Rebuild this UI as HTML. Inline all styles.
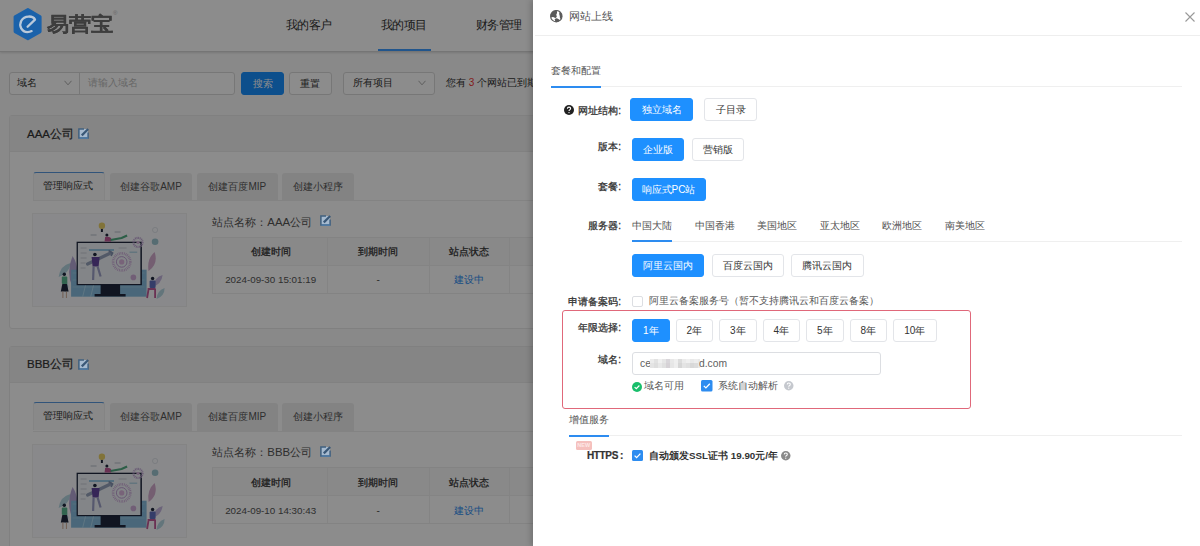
<!DOCTYPE html>
<html><head><meta charset="utf-8">
<style>
*{box-sizing:border-box;margin:0;padding:0}
html,body{width:1200px;height:546px;overflow:hidden}
body{position:relative;background:#f9f9f9;font-family:"Liberation Sans",sans-serif;color:#333;font-size:10px}
.a{position:absolute;white-space:nowrap}
.hdr{left:0;top:0;width:1200px;height:51.8px;background:#fff;border-bottom:1px solid #d6d6d6;box-shadow:0 1px 2px rgba(0,0,0,.12)}
.nav{font-size:11.5px;color:#333;top:16.6px;line-height:16px;letter-spacing:-.6px}
.ibox{border:1px solid #d9d9d9;border-radius:3px;background:#fff}
.btn{border:1px solid #d9d9d9;border-radius:3px;background:#fff;text-align:center;color:#333}
.bp{background:#1890ff;border-color:#1890ff;color:#fff}
.card{left:8.5px;width:1183px;border:1px solid #eaeaea;border-radius:3px;background:#fff}
.chd{left:0;top:0;width:100%;height:36px;border-bottom:1px solid #ebebeb;background:#f2f2f2}
.tab{top:0;height:28px;border:none;background:#efefef;color:#555;font-size:10px;text-align:center;line-height:27px;border-radius:3px 3px 0 0}
.tab.on{background:#fafafa;border:1px solid #f0f0f0;border-bottom:none;border-top:1.5px solid #5a9ade;color:#333;line-height:25px}
.tbl{border:1px solid #efefef}
.th{font-weight:400;-webkit-text-stroke:.25px #333;color:#333;font-size:10px;text-align:center}
.td{color:#555;font-size:10px;text-align:center}
.mask{left:0;top:0;width:1200px;height:546px;background:rgba(0,0,0,.45)}
.drw{left:533px;top:0;width:667px;height:546px;background:#fff;box-shadow:-2px 0 6px rgba(0,0,0,.2)}
.lbl{font-weight:400;-webkit-text-stroke:.28px #333;color:#333;font-size:10px;text-align:right;right:0;line-height:12px}
.dbtn{border:1px solid #e3e5e9;border-radius:3px;background:#fff;text-align:center;color:#333;font-size:10px;height:23px;line-height:21px}
.dbtn.on{background:#1e90ff;border-color:#1e90ff;color:#fff}
.stab{font-size:10px;color:#515151;line-height:12px}
</style></head>
<body>
<!-- ===== background page ===== -->
<div class="a hdr"></div>

<div class="a" style="left:46.5px;top:10px;font-size:22px;font-weight:bold;color:#707070;-webkit-text-stroke:.15px #707070;letter-spacing:0px;line-height:28px;transform:scaleY(.9);transform-origin:0 22px">易营宝</div>
<div class="a" style="left:113px;top:10px;font-size:6px;color:#bbb">®</div>
<div class="a nav" style="left:285.8px">我的客户</div>
<div class="a nav" style="left:381px">我的项目</div>
<div class="a nav" style="left:476px">财务管理</div>
<div class="a" style="left:377.5px;top:49px;width:53px;height:2px;background:#3c9cff"></div>

<!-- search row -->
<div class="a ibox" style="left:9px;top:72px;width:226px;height:23px"></div>
<div class="a" style="left:79px;top:72px;width:1px;height:23px;background:#d9d9d9"></div>
<div class="a" style="left:17px;top:77px;font-size:10px;line-height:12px;color:#333">域名</div>
<svg class="a" style="left:64px;top:80px" width="8" height="6" viewBox="0 0 8 6"><path d="M.5 .8 L4 4.8 L7.5 .8" fill="none" stroke="#aaa" stroke-width="1"/></svg>
<div class="a" style="left:88px;top:77px;font-size:10px;line-height:12px;color:#bbb">请输入域名</div>
<div class="a btn bp" style="left:241px;top:72px;width:43px;height:23px;line-height:21px;font-size:10px">搜索</div>
<div class="a btn" style="left:288.5px;top:72px;width:43px;height:23px;line-height:21px;font-size:10px">重置</div>
<div class="a ibox" style="left:343px;top:72px;width:92px;height:23px"></div>
<div class="a" style="left:353px;top:77px;font-size:10px;line-height:12px;color:#333">所有项目</div>
<svg class="a" style="left:418px;top:80px" width="8" height="6" viewBox="0 0 8 6"><path d="M.5 .8 L4 4.8 L7.5 .8" fill="none" stroke="#aaa" stroke-width="1"/></svg>
<div class="a" style="left:446px;top:77px;font-size:10px;line-height:12px;color:#333">您有 <span style="color:#e33">3</span> 个网站已到期</div>

<!-- card template placeholder -->
<div class="a card" style="top:115px;height:214px">
 <div class="a chd"></div>
 <div class="a" style="left:17.5px;top:10.5px;font-size:11.5px;line-height:14px;color:#333;-webkit-text-stroke:.2px #333">AAA公司</div>
 <svg class="a" style="left:68.6px;top:12.2px;z-index:5" width="11" height="11" viewBox="0 0 11 11"><rect x="1" y="1" width="9" height="9" fill="#a6bacf"/><path d="M6 .9 H.9 V10.1 H10.1 V4.6" fill="none" stroke="#40607f" stroke-width="1.5"/><path d="M1.5 10.1 H10.1" stroke="#4f7eab" stroke-width="1.3"/><path d="M3.8 7.4 L10.2 1" stroke="#3a5877" stroke-width="2.2"/></svg>
 <div class="a" style="left:23.4px;top:84px;width:1150px;height:1px;background:#efefef"></div>
 <div class="a tab on" style="left:23.4px;top:55.5px;width:72px;text-indent:-2px">管理响应式</div>
 <div class="a tab" style="left:100.3px;top:56.5px;width:82.4px;height:27.5px">创建谷歌AMP</div>
 <div class="a tab" style="left:187.3px;top:56.5px;width:81px;height:27.5px">创建百度MIP</div>
 <div class="a tab" style="left:272.8px;top:56.5px;width:72px;height:27.5px">创建小程序</div>
 <div class="a" style="left:22.9px;top:97px;width:155px;height:94px;border:1px solid #f0f0f0;background:#f9fafd;overflow:hidden"><svg width="153" height="92" viewBox="0 0 153 92" style="filter:saturate(.7)">
<g transform="translate(-32.4,-213)">
 <path d="M58 276 q2 -12 12 -14 q-1 10 -12 14z" fill="#a8d8e8"/>
 <path d="M72 286 q-7 -14 0 -31 q9 14 0 31z" fill="#b9a3e6"/>
 <path d="M66 292 q-6 -6 -2 -14 q6 6 2 14z" fill="#9fd0e0"/>
 <path d="M148 270 q-2 -12 6 -19 q4 12 -6 19z" fill="#e0a6d8"/>
 <path d="M152 286 q2 -10 10 -12 q-1 9 -10 12z" fill="#c9b3ee"/>
 <path d="M156 298 q0 -8 8 -11 q0 8 -8 11z" fill="#a8d8e8"/>
 <rect x="70.5" y="268.7" width="75.5" height="27" fill="#74c0f0"/>
 <path d="M72 272 h72 M72 279 h72 M72 286 h72" stroke="#8fd0f5" stroke-width=".8"/>
 <path d="M82 296 l6 -24 M90 296 l6 -24" stroke="#a8e0ff" stroke-width=".8"/>
 <rect x="100" y="284" width="19.5" height="10.5" fill="#1b2746"/>
 <rect x="94" y="293" width="31" height="2.5" fill="#1b2746"/>
 <rect x="76" y="240.7" width="65.3" height="43.5" fill="#1b2746"/>
 <rect x="77.3" y="242" width="62.5" height="41" fill="#eef2f9"/>
 <rect x="88.4" y="248.2" width="25" height="1.6" fill="#6fc0f0"/>
 <rect x="128.9" y="250.5" width="7.7" height="1.5" fill="#a8d8f0"/>
 <path d="M80 247 h6 M80 252 h6 M80 257 h6 M80 262 h5 M80 267 h5" stroke="#c9d0dc" stroke-width="1"/>
 <path d="M118 247 h8" stroke="#c9d0dc" stroke-width="1"/>
 <circle cx="121.1" cy="260.9" r="8.6" fill="none" stroke="#d6a6ea" stroke-width="2.6" stroke-dasharray=".8 .9"/>
 <circle cx="121.1" cy="260.9" r="5.3" fill="none" stroke="#c99ae6" stroke-width="1"/>
 <circle cx="121.1" cy="260.9" r="2.6" fill="#e6b0e8"/>
 <circle cx="137.4" cy="241.4" r="4.5" fill="none" stroke="#c9a3e6" stroke-width="2.2" stroke-dasharray="1 .6"/>
 <circle cx="137.4" cy="241.4" r="1.6" fill="#e0b0e8"/>
 <circle cx="154.5" cy="240.7" r="3.3" fill="#8fc8d8"/>
 <circle cx="154.5" cy="229" r="2.6" fill="none" stroke="#d8dde8" stroke-width=".8"/>
 <circle cx="132.8" cy="276.4" r="2.8" fill="#d9a6e6"/>
 <path d="M87 263 L110 252" stroke="#8fa3c8" stroke-width="3.2" stroke-linecap="round"/>
 <path d="M108 249.5 l4 2.5 l-1.5 3" fill="none" stroke="#7d93bf" stroke-width="1.6"/>
 <circle cx="94.3" cy="253.5" r="1.8" fill="#1b2746"/>
 <path d="M91 256 h8 l-1 9.5 h-6z" fill="#6a3fc0"/>
 <path d="M93 265.5 l-.5 13.5 M97 265.5 l3 10" stroke="#9aa0d8" stroke-width="2.2"/>
 <path d="M101.3 227.5 v3.5" stroke="#1b2746" stroke-width="2"/>
 <circle cx="101.3" cy="224.8" r="3.2" fill="#f7d23c"/>
 <path d="M90 234 h6 M114 231 h6" stroke="#b8c2d0" stroke-width="1.2"/>
 <circle cx="106.3" cy="234" r="1.5" fill="#1b2746"/>
 <path d="M104.5 236 q3 -1 6 1 v3.5 h-6.5z" fill="#e34da6"/>
 <path d="M110 239 L121 237 L126.5 234.5" fill="none" stroke="#35b57a" stroke-width="2.2"/>
 <circle cx="63.7" cy="273.3" r="1.7" fill="#1b2746"/>
 <rect x="61.2" y="275.5" width="5.5" height="7.5" rx="1" fill="#3fbf8a"/>
 <path d="M60.2 290.5 l1.5 -7.5 h4.6 l1.7 7.5z" fill="#1b2746"/>
 <path d="M62.3 290.5 v6.5 M65.8 290.5 v6.5" stroke="#d9a78a" stroke-width="1"/>
 <circle cx="152" cy="277.5" r="1.7" fill="#1b2746"/>
 <rect x="149" y="279.5" width="6" height="7.5" rx="1" fill="#5a6fe0"/>
 <path d="M147 288 h8 M148 288 l-1.5 9 M154.5 288 v9" stroke="#e34da6" stroke-width="1.8" fill="none"/>
</g></svg></div>
 <div class="a" style="left:202.8px;top:98.6px;font-size:11.4px;line-height:14px;color:#555">站点名称：AAA公司</div>
 <svg class="a" style="left:310.3px;top:99.2px;z-index:5" width="11" height="11" viewBox="0 0 11 11"><rect x="1" y="1" width="9" height="9" fill="#a6bacf"/><path d="M6 .9 H.9 V10.1 H10.1 V4.6" fill="none" stroke="#40607f" stroke-width="1.5"/><path d="M1.5 10.1 H10.1" stroke="#4f7eab" stroke-width="1.3"/><path d="M3.8 7.4 L10.2 1" stroke="#3a5877" stroke-width="2.2"/></svg>
 <div class="a tbl" style="left:202.8px;top:120.8px;width:980px;height:57px">
  <div class="a" style="left:0;top:0;width:100%;height:27.8px;background:#fafafa;border-bottom:1px solid #f0f0f0"></div>
  <div class="a" style="left:114.2px;top:0;width:1px;height:100%;background:#f0f0f0"></div>
  <div class="a" style="left:216.2px;top:0;width:1px;height:100%;background:#f0f0f0"></div>
  <div class="a" style="left:296.1px;top:0;width:1px;height:100%;background:#f0f0f0"></div>
  <div class="a th" style="left:0;top:8.2px;width:114.7px;line-height:12px">创建时间</div>
  <div class="a th" style="left:114.2px;top:8.2px;width:101.5px;line-height:12px">到期时间</div>
  <div class="a th" style="left:216.2px;top:8.2px;width:79px;line-height:12px">站点状态</div>
  <div class="a td" style="left:0;top:36.5px;width:114.7px;line-height:12px;font-size:9.8px">2024-09-30 15:01:19</div>
  <div class="a td" style="left:114.2px;top:36.5px;width:101.5px;line-height:12px">-</div>
  <div class="a td" style="left:216.2px;top:36.5px;width:79px;line-height:12px;color:#2d8cf0">建设中</div>
 </div>
</div>
<div class="a card" style="top:345.7px;height:214px">
 <div class="a chd"></div>
 <div class="a" style="left:17.5px;top:10.5px;font-size:11.5px;line-height:14px;color:#333;-webkit-text-stroke:.2px #333">BBB公司</div>
 <svg class="a" style="left:68.6px;top:12.2px;z-index:5" width="11" height="11" viewBox="0 0 11 11"><rect x="1" y="1" width="9" height="9" fill="#a6bacf"/><path d="M6 .9 H.9 V10.1 H10.1 V4.6" fill="none" stroke="#40607f" stroke-width="1.5"/><path d="M1.5 10.1 H10.1" stroke="#4f7eab" stroke-width="1.3"/><path d="M3.8 7.4 L10.2 1" stroke="#3a5877" stroke-width="2.2"/></svg>
 <div class="a" style="left:23.4px;top:84px;width:1150px;height:1px;background:#efefef"></div>
 <div class="a tab on" style="left:23.4px;top:55.5px;width:72px;text-indent:-2px">管理响应式</div>
 <div class="a tab" style="left:100.3px;top:56.5px;width:82.4px;height:27.5px">创建谷歌AMP</div>
 <div class="a tab" style="left:187.3px;top:56.5px;width:81px;height:27.5px">创建百度MIP</div>
 <div class="a tab" style="left:272.8px;top:56.5px;width:72px;height:27.5px">创建小程序</div>
 <div class="a" style="left:22.9px;top:97px;width:155px;height:94px;border:1px solid #f0f0f0;background:#f9fafd;overflow:hidden"><svg width="153" height="92" viewBox="0 0 153 92" style="filter:saturate(.7)">
<g transform="translate(-32.4,-213)">
 <path d="M58 276 q2 -12 12 -14 q-1 10 -12 14z" fill="#a8d8e8"/>
 <path d="M72 286 q-7 -14 0 -31 q9 14 0 31z" fill="#b9a3e6"/>
 <path d="M66 292 q-6 -6 -2 -14 q6 6 2 14z" fill="#9fd0e0"/>
 <path d="M148 270 q-2 -12 6 -19 q4 12 -6 19z" fill="#e0a6d8"/>
 <path d="M152 286 q2 -10 10 -12 q-1 9 -10 12z" fill="#c9b3ee"/>
 <path d="M156 298 q0 -8 8 -11 q0 8 -8 11z" fill="#a8d8e8"/>
 <rect x="70.5" y="268.7" width="75.5" height="27" fill="#74c0f0"/>
 <path d="M72 272 h72 M72 279 h72 M72 286 h72" stroke="#8fd0f5" stroke-width=".8"/>
 <path d="M82 296 l6 -24 M90 296 l6 -24" stroke="#a8e0ff" stroke-width=".8"/>
 <rect x="100" y="284" width="19.5" height="10.5" fill="#1b2746"/>
 <rect x="94" y="293" width="31" height="2.5" fill="#1b2746"/>
 <rect x="76" y="240.7" width="65.3" height="43.5" fill="#1b2746"/>
 <rect x="77.3" y="242" width="62.5" height="41" fill="#eef2f9"/>
 <rect x="88.4" y="248.2" width="25" height="1.6" fill="#6fc0f0"/>
 <rect x="128.9" y="250.5" width="7.7" height="1.5" fill="#a8d8f0"/>
 <path d="M80 247 h6 M80 252 h6 M80 257 h6 M80 262 h5 M80 267 h5" stroke="#c9d0dc" stroke-width="1"/>
 <path d="M118 247 h8" stroke="#c9d0dc" stroke-width="1"/>
 <circle cx="121.1" cy="260.9" r="8.6" fill="none" stroke="#d6a6ea" stroke-width="2.6" stroke-dasharray=".8 .9"/>
 <circle cx="121.1" cy="260.9" r="5.3" fill="none" stroke="#c99ae6" stroke-width="1"/>
 <circle cx="121.1" cy="260.9" r="2.6" fill="#e6b0e8"/>
 <circle cx="137.4" cy="241.4" r="4.5" fill="none" stroke="#c9a3e6" stroke-width="2.2" stroke-dasharray="1 .6"/>
 <circle cx="137.4" cy="241.4" r="1.6" fill="#e0b0e8"/>
 <circle cx="154.5" cy="240.7" r="3.3" fill="#8fc8d8"/>
 <circle cx="154.5" cy="229" r="2.6" fill="none" stroke="#d8dde8" stroke-width=".8"/>
 <circle cx="132.8" cy="276.4" r="2.8" fill="#d9a6e6"/>
 <path d="M87 263 L110 252" stroke="#8fa3c8" stroke-width="3.2" stroke-linecap="round"/>
 <path d="M108 249.5 l4 2.5 l-1.5 3" fill="none" stroke="#7d93bf" stroke-width="1.6"/>
 <circle cx="94.3" cy="253.5" r="1.8" fill="#1b2746"/>
 <path d="M91 256 h8 l-1 9.5 h-6z" fill="#6a3fc0"/>
 <path d="M93 265.5 l-.5 13.5 M97 265.5 l3 10" stroke="#9aa0d8" stroke-width="2.2"/>
 <path d="M101.3 227.5 v3.5" stroke="#1b2746" stroke-width="2"/>
 <circle cx="101.3" cy="224.8" r="3.2" fill="#f7d23c"/>
 <path d="M90 234 h6 M114 231 h6" stroke="#b8c2d0" stroke-width="1.2"/>
 <circle cx="106.3" cy="234" r="1.5" fill="#1b2746"/>
 <path d="M104.5 236 q3 -1 6 1 v3.5 h-6.5z" fill="#e34da6"/>
 <path d="M110 239 L121 237 L126.5 234.5" fill="none" stroke="#35b57a" stroke-width="2.2"/>
 <circle cx="63.7" cy="273.3" r="1.7" fill="#1b2746"/>
 <rect x="61.2" y="275.5" width="5.5" height="7.5" rx="1" fill="#3fbf8a"/>
 <path d="M60.2 290.5 l1.5 -7.5 h4.6 l1.7 7.5z" fill="#1b2746"/>
 <path d="M62.3 290.5 v6.5 M65.8 290.5 v6.5" stroke="#d9a78a" stroke-width="1"/>
 <circle cx="152" cy="277.5" r="1.7" fill="#1b2746"/>
 <rect x="149" y="279.5" width="6" height="7.5" rx="1" fill="#5a6fe0"/>
 <path d="M147 288 h8 M148 288 l-1.5 9 M154.5 288 v9" stroke="#e34da6" stroke-width="1.8" fill="none"/>
</g></svg></div>
 <div class="a" style="left:202.8px;top:98.6px;font-size:11.4px;line-height:14px;color:#555">站点名称：BBB公司</div>
 <svg class="a" style="left:310.3px;top:99.2px;z-index:5" width="11" height="11" viewBox="0 0 11 11"><rect x="1" y="1" width="9" height="9" fill="#a6bacf"/><path d="M6 .9 H.9 V10.1 H10.1 V4.6" fill="none" stroke="#40607f" stroke-width="1.5"/><path d="M1.5 10.1 H10.1" stroke="#4f7eab" stroke-width="1.3"/><path d="M3.8 7.4 L10.2 1" stroke="#3a5877" stroke-width="2.2"/></svg>
 <div class="a tbl" style="left:202.8px;top:120.8px;width:980px;height:57px">
  <div class="a" style="left:0;top:0;width:100%;height:27.8px;background:#fafafa;border-bottom:1px solid #f0f0f0"></div>
  <div class="a" style="left:114.2px;top:0;width:1px;height:100%;background:#f0f0f0"></div>
  <div class="a" style="left:216.2px;top:0;width:1px;height:100%;background:#f0f0f0"></div>
  <div class="a" style="left:296.1px;top:0;width:1px;height:100%;background:#f0f0f0"></div>
  <div class="a th" style="left:0;top:8.2px;width:114.7px;line-height:12px">创建时间</div>
  <div class="a th" style="left:114.2px;top:8.2px;width:101.5px;line-height:12px">到期时间</div>
  <div class="a th" style="left:216.2px;top:8.2px;width:79px;line-height:12px">站点状态</div>
  <div class="a td" style="left:0;top:36.5px;width:114.7px;line-height:12px;font-size:9.8px">2024-09-10 14:30:43</div>
  <div class="a td" style="left:114.2px;top:36.5px;width:101.5px;line-height:12px">-</div>
  <div class="a td" style="left:216.2px;top:36.5px;width:79px;line-height:12px;color:#2d8cf0">建设中</div>
 </div>
</div>

<!-- ===== mask ===== -->
<div class="a mask"></div>

<!-- ===== drawer ===== -->
<svg class="a" style="left:12px;top:7px" width="32" height="35" viewBox="0 0 32 35">
  <path d="M15.2 1.3 Q15.9 .9 16.6 1.3 L28.9 8.4 Q29.6 8.9 29.6 9.7 L29.6 24.6 Q29.6 25.4 28.9 25.9 L16.6 33 Q15.9 33.4 15.2 33 L2.4 25.9 Q1.6 25.4 1.6 24.6 L1.6 9.7 Q1.6 8.9 2.4 8.4 Z" fill="#1b62aa"/>
  <path d="M15.6 19.8 L23 12.6 C21 8.6 12.5 8 9.3 13.8 C6.6 19 9.8 25 15.4 25.1 C17 25.1 18.6 24.7 19.6 24.1" fill="none" stroke="#b9c9da" stroke-width="2.3" stroke-linecap="round" stroke-linejoin="round"/>
</svg>
<div class="a drw"></div>
<svg class="a" style="left:550.2px;top:10.4px" width="13" height="13" viewBox="0 0 13 13">
 <defs><clipPath id="gc"><circle cx="6.3" cy="6.2" r="5.8"/></clipPath></defs>
 <circle cx="6.3" cy="6.2" r="5.7" fill="#fff" stroke="#5a5a5a" stroke-width="1.1"/>
 <g clip-path="url(#gc)" fill="#5a5a5a">
  <path d="M0.4 2.1 L3.7 0.4 L6.9 0.5 Q7.4 2.6 6.3 4.4 Q6.6 5.6 6.8 6.7 Q6 7.8 5.1 8.1 Q3.9 7.2 2.6 7.1 L0.4 7.8 Z"/>
  <path d="M9.6 1.6 L12.6 3.6 L12.8 8 L11.7 9.8 Q10.6 9.2 10.2 8.6 Q9.6 7.2 9.8 6.1 Q9.2 4.6 9.2 3.6 Z"/>
  <path d="M4.6 9.2 Q5.6 8.3 6.8 8.2 Q8 8.6 8.7 9.2 Q9.8 9.9 10.8 10.6 L8 12.8 L5 12.6 Q5.5 10.8 4.6 9.2 Z"/>
 </g>
</svg>
<div class="a" style="left:569px;top:8.8px;font-size:11px;line-height:14px;color:#555">网站上线</div>
<svg class="a" style="left:1185px;top:12px" width="10" height="10" viewBox="0 0 10 10"><path d="M.5 .5 L9.5 9.5 M9.5 .5 L.5 9.5" stroke="#999" stroke-width="1.1"/></svg>
<div class="a" style="left:535px;top:35px;width:665px;height:1px;background:#eeeeee"></div>

<div class="a" style="left:551px;top:64.5px;font-size:10px;line-height:12px;color:#555">套餐和配置</div>
<div class="a" style="left:551px;top:86px;width:631px;height:1px;background:#efefef"></div>
<div class="a" style="left:551px;top:85.5px;width:50px;height:2px;background:#2d8cf0"></div>

<!-- row1 -->
<svg class="a" style="left:564px;top:104.7px" width="10" height="10" viewBox="0 0 10 10"><circle cx="5" cy="5" r="5" fill="#222"/><path d="M3.4 3.8 q0 -1.7 1.6 -1.7 q1.6 0 1.6 1.5 q0 .9 -1 1.3 q-.6 .3 -.6 1.1" fill="none" stroke="#fff" stroke-width="1.1"/><circle cx="5" cy="7.6" r=".65" fill="#fff"/></svg>
<div class="a lbl" style="left:553px;width:68px;top:104.5px">网址结构:</div>
<div class="a dbtn on" style="left:630px;top:98px;width:63px">独立域名</div>
<div class="a dbtn" style="left:704px;top:98px;width:53px">子目录</div>
<!-- row2 -->
<div class="a lbl" style="left:553px;width:68px;top:140.5px">版本:</div>
<div class="a dbtn on" style="left:632px;top:138px;width:52px">企业版</div>
<div class="a dbtn" style="left:691.5px;top:138px;width:52px">营销版</div>
<!-- row3 -->
<div class="a lbl" style="left:553px;width:68px;top:180.5px">套餐:</div>
<div class="a dbtn on" style="left:631.5px;top:178px;width:74px">响应式PC站</div>
<!-- row4 -->
<div class="a lbl" style="left:553px;width:68px;top:220.0px">服务器:</div>
<div class="a" style="left:632px;top:241px;width:550px;height:1px;background:#efefef"></div>
<div class="a stab" style="left:632px;top:219.5px">中国大陆</div>
<div class="a stab" style="left:694.5px;top:219.5px">中国香港</div>
<div class="a stab" style="left:757px;top:219.5px">美国地区</div>
<div class="a stab" style="left:819.5px;top:219.5px">亚太地区</div>
<div class="a stab" style="left:882px;top:219.5px">欧洲地区</div>
<div class="a stab" style="left:944.5px;top:219.5px">南美地区</div>
<div class="a" style="left:632px;top:240px;width:40px;height:2px;background:#2d8cf0"></div>
<div class="a dbtn on" style="left:632px;top:253.5px;width:72px">阿里云国内</div>
<div class="a dbtn" style="left:711.5px;top:253.5px;width:72.5px">百度云国内</div>
<div class="a dbtn" style="left:791px;top:253.5px;width:72.5px">腾讯云国内</div>
<!-- row5 -->
<div class="a lbl" style="left:553px;width:68px;top:296.0px">申请备案码:</div>
<div class="a" style="left:632px;top:295.5px;width:11px;height:11px;border:1px solid #dcdee2;border-radius:2px;background:#fff"></div>
<div class="a" style="left:648.5px;top:295px;font-size:10px;line-height:12px;color:#555">阿里云备案服务号（暂不支持腾讯云和百度云备案）</div>
<!-- red box -->
<div class="a" style="left:561.5px;top:309.5px;width:409px;height:99.5px;border:1.6px solid #e0687a;border-radius:3px"></div>
<div class="a lbl" style="left:553px;width:68px;top:321.5px">年限选择:</div>
<div class="a dbtn on" style="left:632px;top:319px;width:37.5px">1年</div>
<div class="a dbtn" style="left:675.5px;top:319px;width:37.5px">2年</div>
<div class="a dbtn" style="left:719px;top:319px;width:37.5px">3年</div>
<div class="a dbtn" style="left:762.5px;top:319px;width:37.5px">4年</div>
<div class="a dbtn" style="left:806px;top:319px;width:37.5px">5年</div>
<div class="a dbtn" style="left:849.5px;top:319px;width:37.5px">8年</div>
<div class="a dbtn" style="left:893px;top:319px;width:43.5px">10年</div>
<div class="a lbl" style="left:553px;width:68px;top:354.0px">域名:</div>
<div class="a" style="left:632px;top:352px;width:249px;height:23px;border:1px solid #dcdee2;border-radius:3px;background:#fff"></div>
<div class="a" style="left:640px;top:357px;font-size:10.3px;line-height:13px;color:#606060">ce</div>
<div class="a" style="left:0;top:0;width:0;height:0"></div><div style="position:absolute;left:0;top:0;filter:blur(.6px)"><div class="a" style="left:650px;top:359.3px;width:4px;height:4.2px;background:#ececec"></div><div class="a" style="left:650px;top:363px;width:4px;height:4.7px;background:#e4e4e4"></div><div class="a" style="left:654px;top:359.3px;width:4px;height:4.2px;background:#e2e2e2"></div><div class="a" style="left:654px;top:363px;width:4px;height:4.7px;background:#dedede"></div><div class="a" style="left:658px;top:359.3px;width:4px;height:4.2px;background:#f0f0f0"></div><div class="a" style="left:658px;top:363px;width:4px;height:4.7px;background:#e8e8e8"></div><div class="a" style="left:662px;top:359.3px;width:4px;height:4.2px;background:#e6e6e6"></div><div class="a" style="left:662px;top:363px;width:4px;height:4.7px;background:#e0e0e0"></div><div class="a" style="left:666px;top:359.3px;width:4px;height:4.2px;background:#d9d6da"></div><div class="a" style="left:666px;top:363px;width:4px;height:4.7px;background:#d6d2d6"></div><div class="a" style="left:670px;top:359.3px;width:4px;height:4.2px;background:#e8e8e8"></div><div class="a" style="left:670px;top:363px;width:4px;height:4.7px;background:#e6e6e6"></div><div class="a" style="left:674px;top:359.3px;width:4px;height:4.2px;background:#efefef"></div><div class="a" style="left:674px;top:363px;width:4px;height:4.7px;background:#eeeeee"></div><div class="a" style="left:678px;top:359.3px;width:4px;height:4.2px;background:#dcdcdc"></div><div class="a" style="left:678px;top:363px;width:4px;height:4.7px;background:#d6d6d6"></div><div class="a" style="left:682px;top:359.3px;width:4px;height:4.2px;background:#ebebeb"></div><div class="a" style="left:682px;top:363px;width:4px;height:4.7px;background:#e4e4e4"></div><div class="a" style="left:686px;top:359.3px;width:4px;height:4.2px;background:#f0f0f0"></div><div class="a" style="left:686px;top:363px;width:4px;height:4.7px;background:#e0e0e0"></div><div class="a" style="left:690px;top:359.3px;width:4px;height:4.2px;background:#e9e9e9"></div><div class="a" style="left:690px;top:363px;width:4px;height:4.7px;background:#d8d8d8"></div><div class="a" style="left:694px;top:359.3px;width:4px;height:4.2px;background:#ededed"></div><div class="a" style="left:694px;top:363px;width:4px;height:4.7px;background:#dcdcdc"></div><div class="a" style="left:698px;top:359.3px;width:1.5px;height:8.4px;background:#e8e8e8"></div></div>
<div class="a" style="left:699px;top:357px;font-size:10.3px;line-height:13px;color:#606060">d.com</div>
<svg class="a" style="left:631.5px;top:381.5px" width="10" height="10" viewBox="0 0 10 10"><circle cx="5" cy="5" r="5" fill="#19be6b"/><path d="M2.6 5.1 L4.3 6.7 L7.4 3.5" fill="none" stroke="#fff" stroke-width="1.2"/></svg>
<div class="a" style="left:644px;top:380px;font-size:10px;line-height:12px;color:#555">域名可用</div>
<svg class="a" style="left:701.3px;top:380px" width="11.5" height="11.5" viewBox="0 0 11.5 11.5"><rect width="11.5" height="11.5" rx="1.5" fill="#2d8cf0"/><path d="M2.8 5.9 L4.9 7.9 L8.8 3.8" fill="none" stroke="#fff" stroke-width="1.3"/></svg>
<div class="a" style="left:718px;top:380px;font-size:10px;line-height:12px;color:#555">系统自动解析</div>
<svg class="a" style="left:784.2px;top:381.3px" width="9.5" height="9.5" viewBox="0 0 10 10"><circle cx="5" cy="5" r="5" fill="#c5c8ce"/><path d="M3.4 3.8 q0 -1.7 1.6 -1.7 q1.6 0 1.6 1.5 q0 .9 -1 1.3 q-.6 .3 -.6 1.1" fill="none" stroke="#fff" stroke-width="1.1"/><circle cx="5" cy="7.6" r=".65" fill="#fff"/></svg>
<!-- value added -->
<div class="a" style="left:569px;top:414px;font-size:10px;line-height:12px;color:#555">增值服务</div>
<div class="a" style="left:569px;top:435px;width:613px;height:1px;background:#efefef"></div>
<div class="a" style="left:569px;top:434.5px;width:40px;height:2px;background:#2d8cf0"></div>
<div class="a" style="left:575.5px;top:441.3px;width:16.5px;height:8.5px;background:#f5c0bd;border-radius:1.5px;font-size:5.5px;font-weight:bold;line-height:8.5px;color:#fde8e6;text-align:center">NEW</div><div class="a" style="left:589px;top:448px;width:0;height:0;border-left:3px solid #f5c0bd;border-bottom:3px solid transparent"></div>
<div class="a lbl" style="left:553px;width:70px;top:449.6px;font-size:10px;letter-spacing:-.35px;font-weight:bold;-webkit-text-stroke:.2px #333">HTTPS<span style="margin-left:2px">:</span></div>
<svg class="a" style="left:632px;top:450px" width="11" height="11" viewBox="0 0 11 11"><rect width="11" height="11" rx="1.5" fill="#2d8cf0"/><path d="M2.6 5.6 L4.6 7.6 L8.4 3.6" fill="none" stroke="#fff" stroke-width="1.3"/></svg>
<div class="a" style="left:649px;top:450px;font-size:9.8px;line-height:12px;color:#333;font-weight:bold;-webkit-text-stroke:0">自动颁发SSL证书 19.90元/年</div>
<svg class="a" style="left:781px;top:451px" width="9.5" height="9.5" viewBox="0 0 10 10"><circle cx="5" cy="5" r="5" fill="#8a8a8a"/><path d="M3.4 3.8 q0 -1.7 1.6 -1.7 q1.6 0 1.6 1.5 q0 .9 -1 1.3 q-.6 .3 -.6 1.1" fill="none" stroke="#fff" stroke-width="1.1"/><circle cx="5" cy="7.6" r=".65" fill="#fff"/></svg>

</body></html>
